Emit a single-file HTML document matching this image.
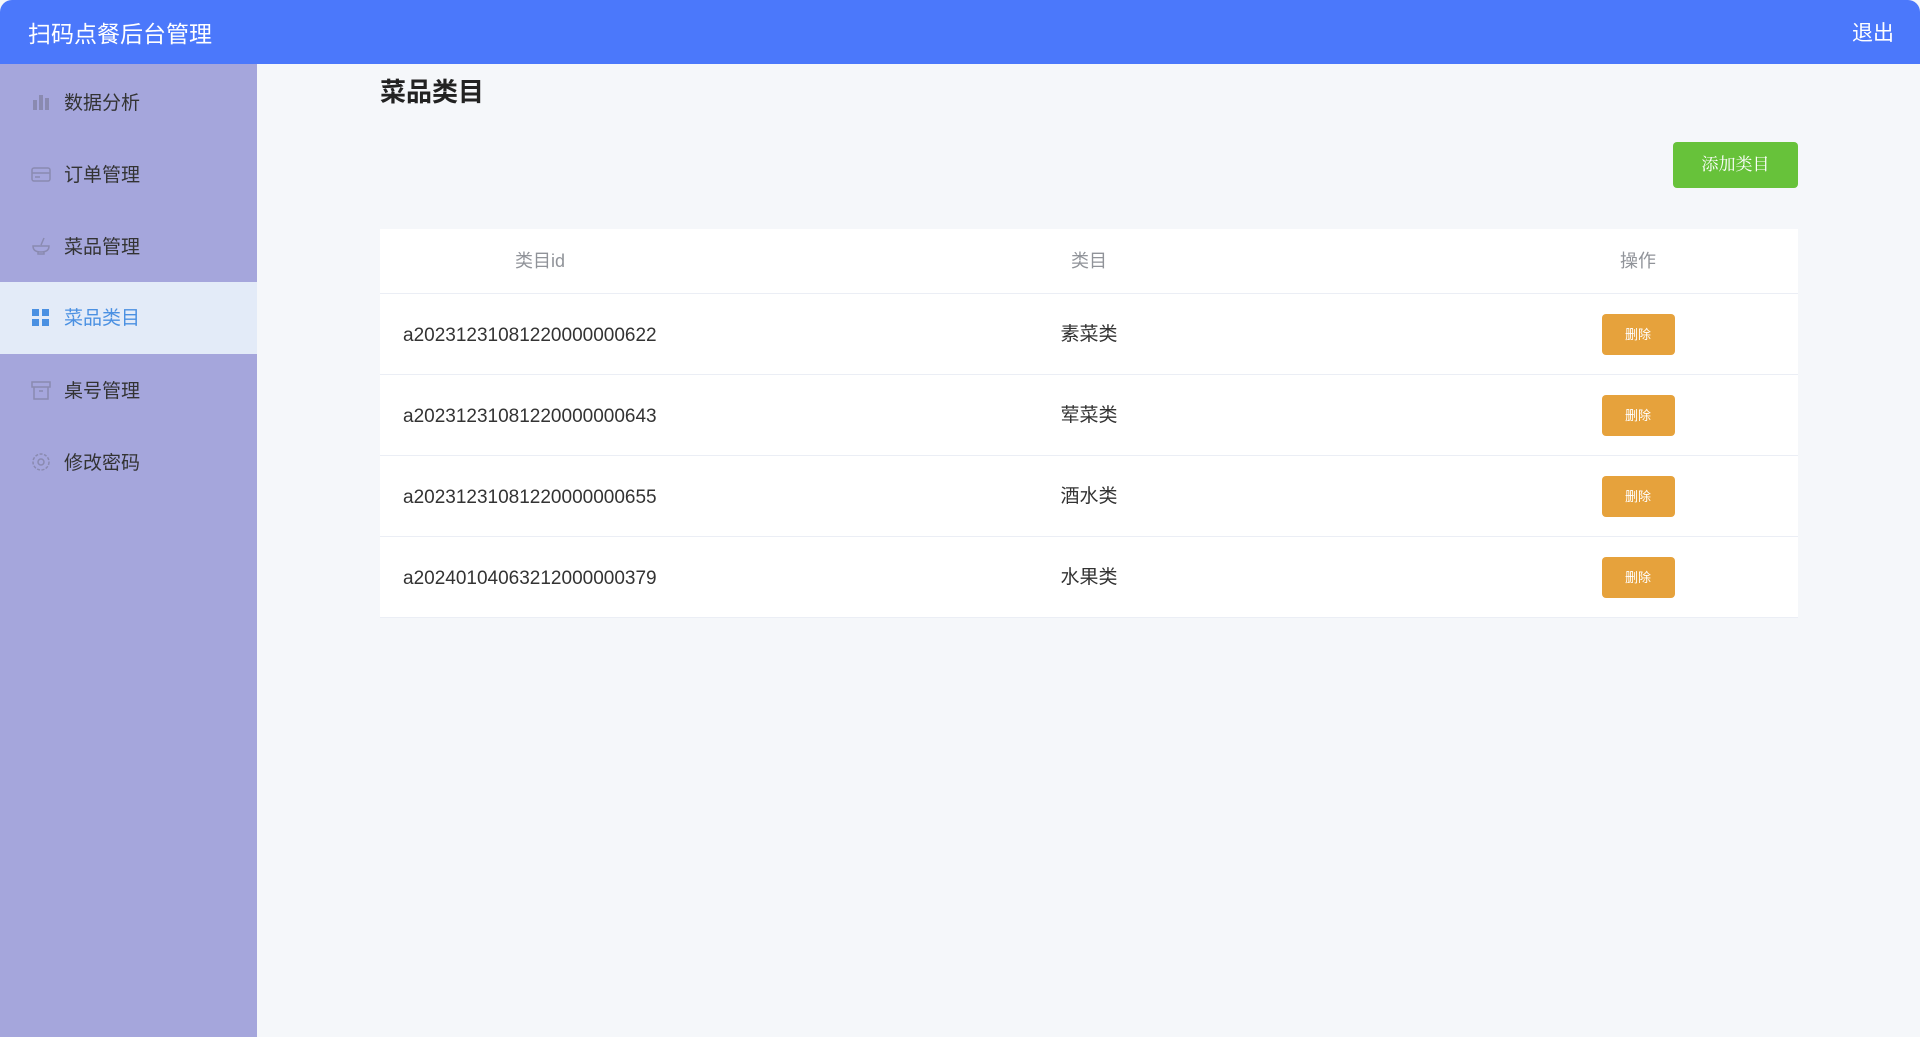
<!DOCTYPE html>
<html><head><meta charset="utf-8"><style>
*{margin:0;padding:0;box-sizing:border-box}
body{width:1920px;height:1037px;overflow:hidden;background:#f5f7fa;font-family:"Liberation Sans","Noto Sans CJK SC",sans-serif;position:relative}
.hd{position:absolute;left:0;top:0;width:1920px;height:64px;background:#4b78fb;color:#fff;border-radius:12px 12px 0 0}
.hd .t{position:absolute;left:28px;top:15px;font-size:23px}
.hd .o{position:absolute;right:26px;top:17px;font-size:21px}
.sb{position:absolute;left:0;top:64px;width:257px;height:973px;background:#a5a6dc}
.it{position:absolute;left:0;width:257px;height:72px;color:#333;font-size:19px}
.it span{position:absolute;left:64px;top:21px}
.it svg{position:absolute;left:31px;top:25px}
.it.a{background:#e3ebf8;color:#4a90e2}
.ttl{position:absolute;left:380px;top:72px;font-size:26px;font-weight:bold;color:#222}
.add{position:absolute;left:1673px;top:142px;width:125px;height:46px;background:#67c23a;color:#fff;border-radius:4px;font-size:17px;text-align:center;line-height:46px;font-family:"Liberation Serif","Noto Serif CJK SC",serif}
.tb{position:absolute;left:380px;top:229px;width:1418px;background:#fff}
.r{position:relative;height:81px;border-bottom:1px solid #ebeef5}
.r.h{height:65px}
.c{position:absolute;top:0;height:100%;display:flex;align-items:center;justify-content:center;font-size:19px;color:#333;line-height:1}
.h .c{color:#909399;font-size:18px}
.c1{left:0;width:320px}.c2{left:320px;width:778px}.c3{left:1098px;width:320px}
.r .c1.l{justify-content:flex-start;padding-left:23px;padding-top:2px}
.del{width:73px;height:41px;background:#e6a23c;color:#fff;font-size:13px;border-radius:4px;display:flex;align-items:center;justify-content:center}
</style></head><body>
<div class="hd"><div class="t">扫码点餐后台管理</div><div class="o">退出</div></div>
<div class="sb">
<div class="it" style="top:3px"><svg width="20" height="20" viewBox="0 0 20 20" fill="#8a8ab0"><rect x="2" y="8" width="4" height="10"/><rect x="8" y="3" width="4" height="15"/><rect x="14" y="6" width="4" height="12"/></svg><span>数据分析</span></div>
<div class="it" style="top:75px"><svg width="20" height="20" viewBox="0 0 20 20" fill="none" stroke="#8a8ab0" stroke-width="1.5"><rect x="1" y="4" width="18" height="13" rx="2"/><path d="M1 9h18M4 13h5"/></svg><span>订单管理</span></div>
<div class="it" style="top:147px"><svg width="20" height="20" viewBox="0 0 20 20" fill="none" stroke="#8a8ab0" stroke-width="1.5"><path d="M2 10h16c0 4-3 6-8 6s-8-2-8-6zM7 16v2h6v-2M10 9l3-7"/></svg><span>菜品管理</span></div>
<div class="it a" style="top:218px"><svg width="20" height="20" viewBox="0 0 20 20" fill="#4a90e2"><rect x="1" y="2" width="7" height="7"/><rect x="11" y="2" width="7" height="7"/><rect x="1" y="12" width="7" height="7"/><rect x="11" y="12" width="7" height="7"/></svg><span>菜品类目</span></div>
<div class="it" style="top:291px"><svg width="20" height="20" viewBox="0 0 20 20" fill="none" stroke="#8a8ab0" stroke-width="1.5"><rect x="1" y="2" width="18" height="5"/><path d="M3 7v12h14V7M8 11h4"/></svg><span>桌号管理</span></div>
<div class="it" style="top:363px"><svg width="20" height="20" viewBox="0 0 20 20" fill="none" stroke="#8a8ab0" stroke-width="1.5"><circle cx="10" cy="10" r="3"/><circle cx="10" cy="10" r="8" stroke-dasharray="3 1.5"/></svg><span>修改密码</span></div>
</div>
<div class="ttl">菜品类目</div>
<div class="add">添加类目</div>
<div class="tb">
<div class="r h"><div class="c c1">类目id</div><div class="c c2">类目</div><div class="c c3">操作</div></div>
<div class="r"><div class="c c1 l">a20231231081220000000622</div><div class="c c2">素菜类</div><div class="c c3"><div class="del">删除</div></div></div>
<div class="r"><div class="c c1 l">a20231231081220000000643</div><div class="c c2">荤菜类</div><div class="c c3"><div class="del">删除</div></div></div>
<div class="r"><div class="c c1 l">a20231231081220000000655</div><div class="c c2">酒水类</div><div class="c c3"><div class="del">删除</div></div></div>
<div class="r"><div class="c c1 l">a20240104063212000000379</div><div class="c c2">水果类</div><div class="c c3"><div class="del">删除</div></div></div>
</div>
</body></html>
